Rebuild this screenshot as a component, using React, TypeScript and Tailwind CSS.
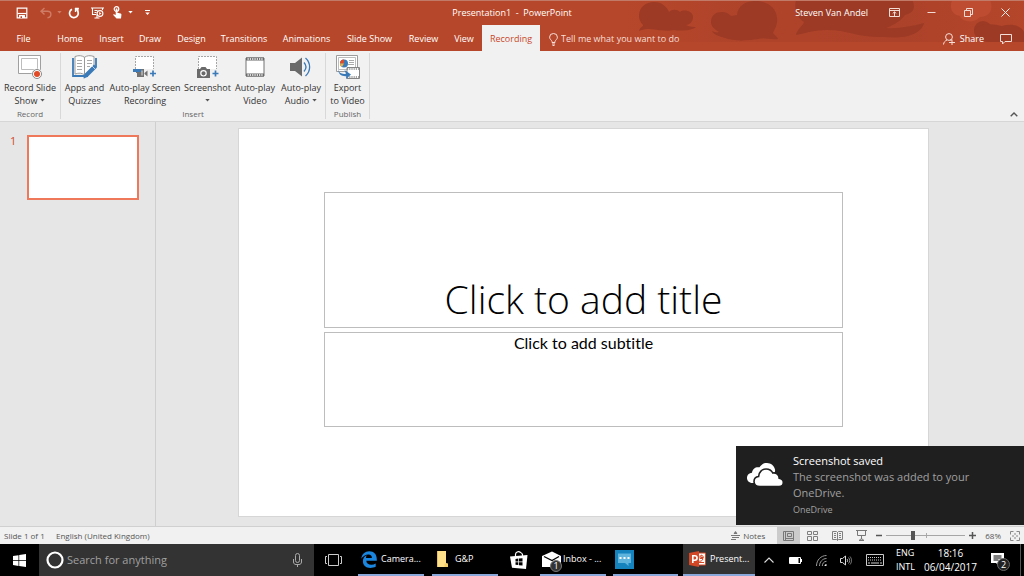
import React from "react";

const tabs = [
  { name: "File", width: "w-[47px]" },
  { name: "Home", width: "w-[46px]" },
  { name: "Insert", width: "w-[37px]" },
  { name: "Draw", width: "w-[40px]" },
  { name: "Design", width: "w-[43px]" },
  { name: "Transitions", width: "w-[62px]" },
  { name: "Animations", width: "w-[63px]" },
  { name: "Slide Show", width: "w-[63px]" },
  { name: "Review", width: "w-[45px]" },
  { name: "View", width: "w-[36px]" },
  { name: "Recording", width: "w-[58px]" },
];

function HeaderArt() {
  return (
    <svg className="pointer-events-none absolute top-0 right-0 h-[42px] w-[400px]" viewBox="0 0 400 42" aria-hidden="true">
      <defs>
        <linearGradient id="shade" x1="0" x2="1">
          <stop offset="0" stopColor="#a8402a" stopOpacity="0" />
          <stop offset="0.25" stopColor="#a8402a" stopOpacity="0.5" />
          <stop offset="0.7" stopColor="#a8402a" stopOpacity="0.7" />
          <stop offset="1" stopColor="#a8402a" stopOpacity="0.2" />
        </linearGradient>
      </defs>
      <rect width="400" height="42" fill="url(#shade)" />
      <g fill="#9c3a25">
        <path d="M15 16C15 7 22 2 30 2c8 0 13 5 15 10 3-3 8-3 11 0 4-3 13-1 13 5 0 5-4 8-7 8 4 2 8 2 10 2-5 4-16 4-22 3-8 2-20-1-27-1-3 0-5 1-8 2 1-4 4-4 4-6-3-3-4-6-4-9z" />
        <path d="M87 22c0-7 5-10 11-10 4 0 7 2 9 4l6-1C114 6 121 1 131 1c12 0 21 6 22 17 1 7-3 12-4 15 1 2 4 3 5 6-8 1-13-2-20 0-12 2-26 2-33-1-6-2-11-3-13-7 2 1 5 2 7 1-5-3-8-6-8-10z" />
        <path d="M172 0h116c4 7 2 13-7 15-6 8-14 11-19 13 13 1 26-2 38-5-3 12-20 16-40 14-25 1-40-8-58-7-11 0-20 3-30 5 1-6 7-9 8-13-8-5-10-14-8-22z" />
        <circle cx="359" cy="30" r="9" />
        <path d="M350 30c8-8 20-6 28-4 10-3 20 0 22 6v10h-34c-12 0-16-6-16-12z" />
      </g>
      <path d="M328 0h38c4 9 0 17-10 17-6 7-18 5-20-1-8-1-11-8-8-16z" fill="#bd4c31" />
    </svg>
  );
}

function Caret({ className = "" }: { className?: string }) {
  return (
    <svg className={className} width="5" height="3" viewBox="0 0 5 3" aria-hidden="true">
      <path d="M0.3 0h4.4L2.5 2.6z" fill="currentColor" />
    </svg>
  );
}

function TitleBar() {
  return (
    <div className="relative grid h-[25px] grid-cols-[1fr_auto_1fr] items-center text-[9px] text-white">
      <div className="flex items-center pl-[16px]">
        <button aria-label="Save" className="mr-[12px]">
          <svg width="12" height="12" viewBox="0 0 12 12" fill="none" stroke="#fff">
            <path d="M1.2 1.2h9.6v9.6H1.2z" strokeWidth="1.2" />
            <path d="M1.5 6.5h9" strokeWidth="1.2" />
            <path d="M3 8h6v3H3z" fill="#fff" stroke="none" />
            <path d="M4.5 9.2h1.500V11H4.5z" fill="#b7472a" stroke="none" />
          </svg>
        </button>
        <button aria-label="Undo" className="mr-[5px] text-[#cf7c66]">
          <svg width="12" height="12" viewBox="0 0 12 12" fill="none" stroke="currentColor" strokeWidth="1.4">
            <path d="M4.5 1L1 4.2l3.500 3.300M1.300 4.200H7.500c4.500 0 4.500 6 0 6.600" />
          </svg>
        </button>
        <Caret className="mr-[6px] text-[#cf7c66]" />
        <button aria-label="Repeat" className="mr-[11px]">
          <svg width="12" height="12" viewBox="0 0 12 12" fill="none" stroke="#fff" strokeWidth="1.7">
            <path d="M4 2.300a4.400 4.400 0 1 0 4.600 0.500" />
            <path d="M6.500 1h4v4z" fill="#fff" stroke="none" />
            <path d="M7 1.500h3.800M7.500 1.500v3.500" strokeWidth="1.300" />
          </svg>
        </button>
        <button aria-label="Start from beginning" className="mr-[8px]">
          <svg width="13" height="12" viewBox="0 0 13 12" fill="none" stroke="#fff" strokeWidth="1.100">
            <path d="M0 1h13M1.500 1v6.500h4M11.500 1v2M3.500 3.500h3M3.500 5.500h2M3.500 11h5M6 8v3" />
            <circle cx="9" cy="6.500" r="2.900" />
            <path d="M8.200 5v3l2.300-1.500z" fill="#fff" stroke="none" />
          </svg>
        </button>
        <button aria-label="Touch mode" className="mr-[5px]">
          <svg width="11" height="13" viewBox="0 0 11 13">
            <circle cx="4.500" cy="3" r="2.300" fill="none" stroke="#fff" strokeWidth="1.200" />
            <path d="M3.700 2.500h1.700v4.200l3.200.9c.7.300.9.700.8 1.400L9 12.500H4.500L1 8.800c.4-.9 1.300-.8 2.700.2z" fill="#fff" />
          </svg>
        </button>
        <Caret className="mr-[12px]" />
        <button aria-label="Customize quick access">
          <svg width="5" height="6" viewBox="0 0 5 6">
            <path d="M0 .5h5" stroke="#fff" />
            <path d="M.3 2.600h4.400L2.500 5z" fill="#fff" />
          </svg>
        </button>
      </div>
      <div className="whitespace-pre pt-px">Presentation1{"  -  "}PowerPoint</div>
      <div className="flex items-center justify-end pr-[14px]">
        <span className="mr-[21px] pt-px">Steven Van Andel</span>
        <button aria-label="Ribbon display options" className="mr-[27px]">
          <svg width="11" height="9" viewBox="0 0 11 9" fill="none" stroke="#f3dcd5">
            <path d="M.5.5h10v8H.5zM.500 2.500h10M5.500 8V4M3.700 5.500l1.800-1.700 1.800 1.700" />
          </svg>
        </button>
        <button aria-label="Minimize" className="mr-[28px]">
          <svg width="9" height="9" viewBox="0 0 9 9" stroke="#f3dcd5">
            <path d="M.500 4.500H8.500" />
          </svg>
        </button>
        <button aria-label="Restore" className="mr-[28px]">
          <svg width="9" height="9" viewBox="0 0 9 9" fill="none" stroke="#f3dcd5">
            <path d="M.500 2.500h6v6h-6zM2.500 2.500v-2h6v6h-2" />
          </svg>
        </button>
        <button aria-label="Close">
          <svg width="9" height="9" viewBox="0 0 9 9" stroke="#fbeeea">
            <path d="M.500.500l8 8M8.500.500l-8 8" />
          </svg>
        </button>
      </div>
    </div>
  );
}

function TabBar() {
  return (
    <div className="relative flex h-[26px] items-stretch text-[9px] text-white">
      <nav className="flex" aria-label="Ribbon tabs">
        {tabs.map((t) => (
          <button
            key={t.name}
            className={`${t.width} whitespace-nowrap pt-[2px] text-center ${t.name === "Recording" ? "bg-[#f1f1f1] text-[#c8482a]" : ""}`}
          >
            {t.name}
          </button>
        ))}
      </nav>
      <label className="ml-[9px] flex flex-1 items-center gap-[3px] pt-[2px]">
        <svg width="9" height="13" viewBox="0 0 9 13" fill="none" stroke="#f6dfd8">
          <path d="M3 9.500V8.500C2.500 7 .6 6.200.6 4.200a3.900 3.700 0 0 1 7.800 0C8.400 6.200 6.500 7 6 8.500v1zM3 11h3M3.500 12.500h2" />
        </svg>
        <input
          aria-label="Tell me what you want to do"
          placeholder="Tell me what you want to do"
          className="w-[180px] bg-transparent text-[9px] outline-none placeholder:text-[#f6dfd8] placeholder:opacity-100"
        />
      </label>
      <div className="flex items-center pt-[2px] pr-[12px]">
        <button className="flex items-center gap-[5px]">
          <svg width="12" height="12" viewBox="0 0 12 12" fill="none" stroke="#f6dfd8">
            <circle cx="6" cy="4" r="3.400" />
            <path d="M.500 11.500c.3-2.400 1.500-3.600 3.500-4.500M7 6.800l1.500.7M6 9.500h6M9 6.500v5.500" />
          </svg>
          Share
        </button>
        <button aria-label="Comments" className="ml-[16px]">
          <svg width="12" height="12" viewBox="0 0 12 12" fill="none" stroke="#f6dfd8">
            <path d="M.500 1.500h11v7H5l-2.500 2.500V8.500h-2z" />
          </svg>
        </button>
      </div>
    </div>
  );
}

function RecordIcon() {
  return (
    <svg width="24" height="24" viewBox="0 0 24 24" fill="none">
      <path d="M.500.500h22v18H.500z" fill="#fff" stroke="#a0a0a0" />
      <path d="M3.500 3.500h16v11h-16z" stroke="#bdbdbd" />
      <circle cx="19" cy="19" r="5.500" fill="#f1f1f1" />
      <circle cx="19" cy="19" r="4.500" fill="#fff" stroke="#888" />
      <circle cx="19" cy="19" r="3" fill="#e04a25" />
    </svg>
  );
}

function AppsIcon() {
  return (
    <svg width="25" height="24" viewBox="0 0 25 24" fill="none">
      <path d="M1 3v18h11l.5.8.5-.8h3M24 3v9" stroke="#3b7ab8" strokeWidth="1.800" />
      <path d="M3 1.500c4-1.400 7-1 9.500.8v17.500C10 18 7 17.600 3 19zM22 1.500c-4-1.400-7-1-9.500.8v17.500c1.500-1 3-1.600 5-1.500L22 12z" fill="#fff" stroke="#9a9a9a" />
      <path d="M5 5.500h5M5 8.500h5M5 11.500h5M5 14.500h5M15 5.500h5M15 8.500h5M15 11.500h3" stroke="#a9a9a9" />
      <path d="M11.500 23.500l1-4.500L22 9.500l3 3-9.500 9.500z" fill="#3b7ab8" />
      <path d="M20 11l3 3" stroke="#f1f1f1" strokeWidth=".7" />
    </svg>
  );
}

function ScreenRecordingIcon() {
  return (
    <svg width="24" height="24" viewBox="0 0 24 24" fill="none">
      <path d="M2.500 14V1.500h18V14" fill="#fff" stroke="#a6a6a6" strokeDasharray="2 1" />
      <path d="M3 14h8v8H4v-4H3z" fill="#727272" />
      <path d="M0 14h8v3H0z" fill="#3b7ab8" />
      <path d="M11.500 18l3-2.500v6l-3-2.500z" fill="#727272" />
      <path d="M9 15.500v5" stroke="#ddd" />
      <path d="M20 15.500v6M17 18.500h6" stroke="#3b7ab8" strokeWidth="1.700" />
    </svg>
  );
}

function ScreenshotIcon() {
  return (
    <svg width="24" height="24" viewBox="0 0 24 24" fill="none">
      <path d="M2.500 14V1.500h18V14" fill="#fff" stroke="#a6a6a6" strokeDasharray="2 1" />
      <path d="M1 14h3l1.500-2h4L11 14h3v9H1z" fill="#6a6a6a" />
      <circle cx="7.500" cy="18.300" r="2.700" stroke="#fff" strokeWidth="1.200" />
      <path d="M19.500 15.500v6M16.500 18.500h6" stroke="#3b7ab8" strokeWidth="1.700" />
    </svg>
  );
}

function VideoIcon() {
  return (
    <svg width="22" height="24" viewBox="0 0 22 24" fill="none">
      <path d="M2 3h18v18H2z" fill="#fff" stroke="#737373" />
      <path d="M2 4h18M2 20h18" stroke="#686868" strokeWidth="3" />
      <path d="M3.500 4h16M3.500 20h16" stroke="#fff" strokeWidth="1.300" strokeDasharray="1.300 1" />
    </svg>
  );
}

function AudioIcon() {
  return (
    <svg width="22" height="24" viewBox="0 0 22 24" fill="none">
      <path d="M0 8h5l7-5.500v19L5 16H0z" fill="#6a6a6a" />
      <path d="M14 7.500c2.500 2.800 2.500 6.200 0 9M15.500 3c5.500 5 5.500 13 0 18" stroke="#3b7ab8" strokeWidth="1.300" />
    </svg>
  );
}

function ExportIcon() {
  return (
    <svg width="24" height="24" viewBox="0 0 24 24" fill="none">
      <path d="M.500.500h21v16H.500z" fill="#fff" stroke="#9c9c9c" />
      <path d="M2.500 2.500h17v12h-17z" stroke="#bdbdbd" />
      <path d="M13 5.500h5M13 7.500h5M12 9.500h6" stroke="#aaa" />
      <path d="M11 12.500h12.500v11H11z" fill="#fff" stroke="#858585" />
      <path d="M11 14h12.500M11 22h12.500" stroke="#858585" strokeWidth="1.400" strokeDasharray="1.200 1" />
      <circle cx="8" cy="8.500" r="4" fill="#3b7ab8" />
      <path d="M8 8.500V4.500a4 4 0 0 0-4 4z" fill="#e04a25" />
      <path d="M8 8.500H4A4 4 0 0 0 6 12z" fill="#efb343" />
      <path d="M2 14c.5 4 4 5.500 8 4.700L8.500 15l6.500 4.500-5 4.500.3-2.800C5.500 21.500 2 19 2 14z" fill="#3b7ab8" />
    </svg>
  );
}

function RibbonButton({ icon, first, second, caret, width }: { icon: React.ReactNode; first: string; second?: string; caret?: boolean; width: string }) {
  return (
    <button className={`${width} flex flex-col items-center text-[9px] leading-[13px] whitespace-nowrap text-[#333]`}>
      <span className="mb-[2px] flex h-[24px] items-center">{icon}</span>
      <span>{first}</span>
      <span className="flex h-[13px] items-center gap-[3px]">
        {second}
        {caret && <Caret className="text-[#555]" />}
      </span>
    </button>
  );
}

function RibbonGroup({ label, children }: { label: string; children: React.ReactNode }) {
  return (
    <section className="my-[2px] flex flex-col items-center border-r border-[#d8d8d8] pt-[2px]">
      <div className="flex">{children}</div>
      <h2 className="pt-px text-[8px] leading-[12px] text-[#666]">{label}</h2>
    </section>
  );
}

function Ribbon() {
  return (
    <div className="flex h-[71px] border-b border-[#d6d6d6] bg-[#f1f1f1]">
      <RibbonGroup label="Record">
        <RibbonButton width="w-[60px]" icon={<RecordIcon />} first="Record Slide" second="Show" caret />
      </RibbonGroup>
      <RibbonGroup label="Insert">
        <RibbonButton width="w-[47px]" icon={<AppsIcon />} first="Apps and" second="Quizzes" />
        <RibbonButton width="w-[74px]" icon={<ScreenRecordingIcon />} first="Auto-play Screen" second="Recording" />
        <RibbonButton width="w-[51px]" icon={<ScreenshotIcon />} first="Screenshot" caret />
        <RibbonButton width="w-[44px]" icon={<VideoIcon />} first="Auto-play" second="Video" />
        <RibbonButton width="w-[48px]" icon={<AudioIcon />} first="Auto-play" second="Audio" caret />
      </RibbonGroup>
      <RibbonGroup label="Publish">
        <RibbonButton width="w-[43px]" icon={<ExportIcon />} first="Export" second="to Video" />
      </RibbonGroup>
      <button aria-label="Collapse the ribbon" className="mr-[6px] mb-[4px] ml-auto self-end">
        <svg width="8" height="5" viewBox="0 0 8 5" fill="none" stroke="#555" strokeWidth="1.400">
          <path d="M.700 4.300L4 1l3.300 3.300" />
        </svg>
      </button>
    </div>
  );
}

function Toast() {
  return (
    <aside className="absolute right-0 bottom-[1px] flex h-[79px] w-[288px] bg-[#1f1f1f] pt-[7px] pl-[11px]">
      <svg className="mt-[9px] mr-[10px] shrink-0" width="36" height="26" viewBox="0 0 36 26" aria-hidden="true">
        <path d="M8 21H5.500C2 21 0 18.500 0 16c0-3 2.200-5 5-5.200C5.500 6.500 9 4.500 12.500 5.300 14.500 2 17.500.800 20 1c4 .2 7 2.600 8 6.500 1 5-5 12-20 13.500z" fill="#fff" />
        <path d="M13 24.500c-4 0-6-2.200-6-5 0-2.700 2-4.700 4.600-5 .2-4.500 3.500-7.500 7.500-7.500 3 0 5.400 1.500 6.700 4 3.700-.6 6.300 2 6.400 5.200 2.500.4 4.100 2 4.100 4.200 0 2.400-1.800 4.100-4.300 4.100z" fill="#fff" stroke="#1f1f1f" strokeWidth="1.600" />
      </svg>
      <div className="text-[11px] leading-[16px] text-[#a0a0a0]">
        <h2 className="text-white">Screenshot saved</h2>
        <p className="w-[200px]">The screenshot was added to your OneDrive.</p>
        <p className="mt-[1px] text-[9px] leading-[16px]">OneDrive</p>
      </div>
    </aside>
  );
}

function Workspace() {
  return (
    <main className="relative flex flex-1 border-b border-[#d0d0d0] bg-[#e6e6e6]">
      <aside className="flex w-[156px] shrink-0 items-start border-r border-[#cfcfcf] pt-[13px] pl-[10px]">
        <span className="w-[17px] text-[11px] leading-[11px] text-[#d2492a]">1</span>
        <button aria-label="Slide 1" className="h-[65px] w-[112px] border-2 border-[#f0785a] bg-white" />
      </aside>
      <div className="flex-1 pt-[6px] pr-[95px] pl-[82px]">
        <article className="aspect-video border border-[#d6d6d6] bg-white px-[12.3%] pt-[63px]">
          <div className="flex h-[136px] items-end justify-center border border-[#bdbdbd]">
            <h1 className="text-[39px] leading-[56px] font-light whitespace-nowrap text-black">Click to add title</h1>
          </div>
          <div className="mt-[4px] h-[95px] border border-[#bdbdbd] text-center">
            <p className="font-[Lato,'Open_Sans',sans-serif] text-[16px] leading-[19px] text-black [font-variant-ligatures:none]">Click to add subtitle</p>
          </div>
        </article>
      </div>
      <Toast />
    </main>
  );
}

function StatusBar() {
  return (
    <footer className="flex h-[17px] items-center bg-[#f1f1f1] pl-[4px] text-[8px] text-[#555]">
      <span className="w-[52px] whitespace-nowrap">Slide 1 of 1</span>
      <span>English (United Kingdom)</span>
      <button className="mr-[12px] ml-auto flex items-center gap-[3px]">
        <svg width="9" height="9" viewBox="0 0 9 9" fill="none" stroke="#777">
          <path d="M0 4.500h9M1 6.500h7M0 8.500h5M3 2.500h3" />
          <path d="M4.500 0l2 2.500h-4z" fill="#777" stroke="none" />
        </svg>
        Notes
      </button>
      <button aria-label="Normal view" className="flex h-[17px] w-[23px] items-center justify-center bg-[#cbcbcb]">
        <svg width="11" height="10" viewBox="0 0 11 10" fill="none" stroke="#777">
          <path d="M.500.500h10v9H.500zM2.500 1v8M4.500 2.500h4v3h-4zM2.500 7.500h8" />
        </svg>
      </button>
      <button aria-label="Slide sorter" className="flex w-[25px] justify-center">
        <svg width="11" height="10" viewBox="0 0 11 10" fill="none" stroke="#808080">
          <path d="M.500.500h4v3h-4zM6.500.500h4v3h-4zM.500 5.500h4v4h-4zM6.500 5.500h4v4h-4z" />
        </svg>
      </button>
      <button aria-label="Reading view" className="flex w-[24px] justify-center">
        <svg width="11" height="10" viewBox="0 0 11 10" fill="none" stroke="#808080">
          <path d="M.500.500h4l1 1 1-1h4v8h-4l-1 1-1-1h-4zM5.500 1v8.500M2 2.500h2M2 4.500h2M2 6.500h2M7 2.500h2M7 4.500h2M7 6.500h2" />
        </svg>
      </button>
      <button aria-label="Slide show" className="flex w-[24px] justify-center">
        <svg width="11" height="11" viewBox="0 0 11 11" fill="none" stroke="#777">
          <path d="M0 .500h11M1.500.500v5h8v-5M5.500 5.500v4M3 10.500l2.500-2 2.500 2z" />
        </svg>
      </button>
      <button aria-label="Zoom out" className="ml-[3px]">
        <svg width="6" height="7" viewBox="0 0 6 7" stroke="#555" strokeWidth="1.500">
          <path d="M0 3.500h6" />
        </svg>
      </button>
      <div className="relative mx-[4px] flex h-[11px] w-[79px] items-center">
        <span className="absolute left-1/2 h-[5px] w-px bg-[#aaa]" />
        <input
          type="range"
          aria-label="Zoom"
          min={0}
          max={100}
          defaultValue={33}
          className="relative h-[11px] w-full appearance-none bg-[linear-gradient(#a6a6a6,#a6a6a6)] bg-[length:100%_1px] bg-center bg-no-repeat [&::-webkit-slider-thumb]:h-[9px] [&::-webkit-slider-thumb]:w-[4px] [&::-webkit-slider-thumb]:appearance-none [&::-webkit-slider-thumb]:bg-[#555]"
        />
      </div>
      <button aria-label="Zoom in">
        <svg width="7" height="7" viewBox="0 0 7 7" stroke="#555" strokeWidth="1.500">
          <path d="M0 3.500h7M3.500 0v7" />
        </svg>
      </button>
      <button className="mr-[9px] ml-[9px]">68%</button>
      <button aria-label="Fit slide to window" className="mr-[4px]">
        <svg width="10" height="10" viewBox="0 0 10 10" fill="none" stroke="#888">
          <path d="M.500 3.500v-3h3M6.500.500h3v3M9.500 6.500v3h-3M3.500 9.500h-3v-3" />
          <path d="M5 2v2M5 6v2M2 5h2M6 5h2" />
        </svg>
      </button>
    </footer>
  );
}

function TaskApp({ icon, label, className }: { icon: React.ReactNode; label: string; className: string }) {
  return (
    <button className={`${className} flex items-center whitespace-nowrap border-b-2 border-[#8aa9da]`} aria-label={label}>
      {icon}
    </button>
  );
}

function Taskbar() {
  return (
    <nav aria-label="Taskbar" className="flex h-[32px] items-stretch bg-black text-[9px] text-white">
      <button aria-label="Start" className="flex w-[39px] items-center justify-center">
        <svg width="13" height="13" viewBox="0 0 13 13" fill="#fff">
          <path d="M0 2l5.500-.8v5H0zM6.200 1.100L13 0v6.200H6.200zM0 6.900h5.500v5L0 11.100zM6.200 6.900H13V13l-6.800-1z" />
        </svg>
      </button>
      <label className="flex w-[275px] items-center bg-[#333] pl-[7px]">
        <svg width="18" height="18" viewBox="0 0 18 18" fill="none" stroke="#fff" strokeWidth="2.200">
          <circle cx="9" cy="9" r="7.500" />
        </svg>
        <input
          aria-label="Search"
          placeholder="Search for anything"
          className="ml-[3px] w-[150px] bg-transparent text-[11px] outline-none placeholder:text-[#a0a0a0] placeholder:opacity-100"
        />
        <svg className="mr-[12px] ml-auto" width="9" height="14" viewBox="0 0 9 14" fill="none" stroke="#aaa">
          <rect x="2.500" y=".5" width="4" height="9" rx="2" />
          <path d="M.500 6v3c0 1.500 1 2.500 2.500 2.500h3c1.500 0 2.500-1 2.500-2.500V6M4.500 11.500V14" />
        </svg>
      </label>
      <button aria-label="Task view" className="flex w-[38px] items-center justify-center">
        <svg width="17" height="12" viewBox="0 0 17 12" fill="none" stroke="#ccc">
          <path d="M3.500.500h10v11h-10zM2 2.500H.500v7H2M15 2.500h1.500v7H15" />
        </svg>
      </button>
      <TaskApp
        label="Camera"
        className="ml-[6px] w-[66px] pl-[3px]"
        icon={
          <>
            <svg className="mr-[4px]" width="16" height="17" viewBox="0 0 16 17">
              <path d="M.300 7.700C.900 3 4 .200 8.300.200c4.700 0 7.500 3.200 7.500 7.800v1.700H5.300c.1 2.700 2.300 4 5 4 1.600 0 3.100-.4 4.400-1.200v3.300c-1.600.8-3.400 1.100-5.300 1.100-4.500 0-7.500-2.700-7.500-6.700 0-2.800 1.400-4.800 4-5.900-.6.700-.9 1.500-1 2.700h6c0-2-1.100-3.400-3.400-3.400C4.500 3.600 1.800 5.300.300 7.700z" fill="#1a86e0" />
            </svg>
            <span>Camera...</span>
          </>
        }
      />
      <TaskApp
        label="G&P"
        className="ml-[8px] w-[66px] pl-[5px]"
        icon={
          <>
            <svg className="mr-[7px]" width="11" height="16" viewBox="0 0 11 16">
              <path d="M0 0h7v16H0z" fill="#e9c15a" />
              <path d="M1 0h8v12l2 1v3H1z" fill="#ffe08a" />
              <path d="M7.500 12.500h3.500V16H7.500z" fill="#f3cd68" />
            </svg>
            <span>G&amp;P</span>
          </>
        }
      />
      <button aria-label="Store" className="flex w-[42px] items-center justify-center">
        <svg width="18" height="18" viewBox="0 0 18 18" fill="none">
          <path d="M5.500 6V4a3 3 0 0 1 5-2.500 3 3 0 0 1 2 2V5" stroke="#fff" strokeWidth="1.200" />
          <path d="M0 5.500L17.500 4 16 18 2 16.800z" fill="#fff" />
          <path d="M5.500 7.900l2.800-.3v2.900H5.500zM9 7.500l3.500-.3v3.300H9zM5.500 11.200h2.800v2.900l-2.800-.3zM9 11.200h3.500v3.300L9 14.200z" fill="#000" />
        </svg>
      </button>
      <TaskApp
        label="Inbox"
        className="w-[66px] pl-[2px]"
        icon={
          <>
            <span className="relative mr-[1px]">
              <svg width="20" height="17" viewBox="0 0 20 17">
                <path d="M0 5l10-4.500L19 5v11H0z" fill="#fff" />
                <path d="M2 5.500l8 4 7-4" fill="#fff" stroke="#000" strokeWidth="1.300" />
              </svg>
              <span className="absolute top-[9px] left-[8px] flex h-[12px] w-[12px] items-center justify-center rounded-full border border-[#777] bg-[#333] text-[9px]">1</span>
            </span>
            <span>Inbox - ...</span>
          </>
        }
      />
      <TaskApp
        label="Messaging"
        className="ml-[7px] w-[65px] pl-[2px]"
        icon={
          <svg width="19" height="19" viewBox="0 0 19 19">
            <path d="M0 0h19v19H0z" fill="#1583bd" />
            <path d="M3 3.500h13V13h-2.500v3L10 13H3z" fill="#5fb4dd" />
            <path d="M4.500 7h2v2h-2zM8.500 7h2v2h-2zM12.500 7h2v2h-2z" fill="#fff" />
          </svg>
        }
      />
      <TaskApp
        label="Presentation"
        className="ml-[5px] w-[72px] bg-[#333] pl-[6px]"
        icon={
          <>
            <svg className="mr-[4px]" width="17" height="16" viewBox="0 0 17 16">
              <path d="M8 2h8.500v12H8z" fill="#fff" stroke="#d24726" />
              <path d="M11 4.500v3h3a3 3 0 0 1-5 2M12 4a3 3 0 0 1 2.500 2.500H12zM9 11.500h6" stroke="#d24726" fill="none" />
              <path d="M0 2l10-2v16L0 14z" fill="#d24726" />
              <path d="M3.800 12V4.800h2c3 0 3 4.400 0 4.400h-2" stroke="#fff" strokeWidth="1.600" fill="none" />
            </svg>
            <span>Present...</span>
          </>
        }
      />
      <div className="ml-auto flex items-center">
        <button aria-label="Show hidden icons" className="mr-[15px]">
          <svg width="10" height="6" viewBox="0 0 10 6" fill="none" stroke="#ddd" strokeWidth="1.100">
            <path d="M.500 5.500L5 1l4.500 4.500" />
          </svg>
        </button>
        <svg className="mr-[14px]" width="13" height="7" viewBox="0 0 13 7" aria-label="Battery">
          <path d="M.500.500h11v6H.500z" fill="none" stroke="#fff" />
          <path d="M1 1h8.500v5H1zM12 2h1v3h-1z" fill="#fff" />
        </svg>
        <svg className="mr-[13px]" width="11" height="11" viewBox="0 0 11 11" fill="none" stroke="#999" aria-label="Network">
          <path d="M.500 11C.500 5 5 .500 10.500.500M3.500 11c0-4 3-7.500 7-7.500M6.300 11c0-2.500 1.700-4.700 4.200-4.700" />
          <path d="M8.500 11c0-1 .7-2 2-2v2z" fill="#eee" stroke="none" />
        </svg>
        <svg className="mr-[14px]" width="12" height="11" viewBox="0 0 12 11" fill="none" stroke="#ddd" aria-label="Volume">
          <path d="M.500 3.500h2L5.500 1v9l-3-2.500h-2zM7 4c.800 1 .800 2 0 3" />
          <path d="M8.500 2.500c1.600 2 1.600 4 0 6M10 1.500c2 2.500 2 5.500 0 8" stroke="#888" />
        </svg>
        <svg className="mr-[12px]" width="18" height="12" viewBox="0 0 18 12" fill="none" stroke="#ccc" aria-label="Touch keyboard">
          <path d="M.500.500h17v11H.500z" />
          <path d="M2 3.500h14M2 6h14" strokeDasharray="1 1" />
          <path d="M2 9h2M5 9h8M14 9h2" />
        </svg>
        <button className="mr-[9px] text-left text-[9px] leading-[14px]">
          ENG
          <br />
          INTL
        </button>
        <button className="mr-[14px] text-center text-[10px] leading-[14px]">
          18:16
          <br />
          06/04/2017
        </button>
        <button aria-label="2 new notifications" className="relative mr-[14px]">
          <svg width="15" height="16" viewBox="0 0 15 16">
            <path d="M0 1h13v10H8v3l-3-3H0z" fill="#fff" />
            <path d="M2.500 4h8M2.500 6h8M2.500 8h5" stroke="#000" />
          </svg>
          <span className="absolute top-[6px] left-[6px] flex h-[13px] w-[13px] items-center justify-center rounded-full border border-[#666] bg-[#222] text-[9px]">2</span>
        </button>
        <button aria-label="Show desktop" className="h-[32px] w-[4px] border-l border-[#555]" />
      </div>
    </nav>
  );
}

export default function App() {
  return (
    <div className="flex min-h-screen flex-col font-['Open_Sans','Noto_Sans',sans-serif]">
      <header className="relative bg-[#b7472a]">
        <HeaderArt />
        <div className="absolute inset-x-0 top-0 h-px bg-[#c07a67]" />
        <TitleBar />
        <TabBar />
      </header>
      <Ribbon />
      <Workspace />
      <StatusBar />
      <Taskbar />
    </div>
  );
}
